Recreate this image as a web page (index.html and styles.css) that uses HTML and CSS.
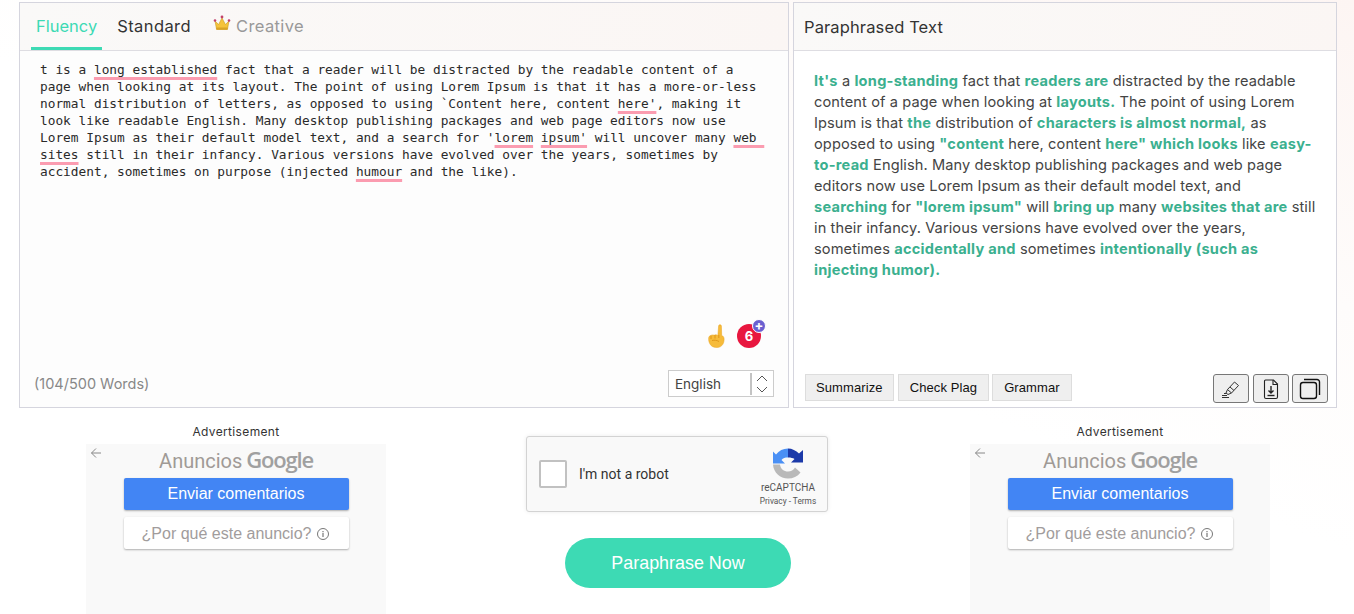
FILE: index.html
```html
<!DOCTYPE html>
<html lang="en">
<head>
<meta charset="utf-8">
<title>Paraphraser</title>
<link rel="stylesheet" href="styles.css">
</head>
<body>
<main class="page">
  <section class="editors">
    <div class="card card-left">
      <div class="card-head tabs">
        <span class="tab tab-active">Fluency</span>
        <span class="tab">Standard</span>
        <span class="tab tab-muted">
          <svg class="crown" viewBox="0 0 18 18" width="18" height="18"><path d="M2 7l3.600 3.500L9 4l3.400 6.500L16 7l-1.500 8h-11z" fill="#f5c33b" stroke="#c99a1e" stroke-width=".6"/><rect x="3.300" y="13.500" width="11.400" height="2.400" fill="#d9a326"/><circle cx="2" cy="6.500" r="1.300" fill="#c2416b"/><circle cx="9" cy="3" r="1.400" fill="#c2416b"/><circle cx="16" cy="6.500" r="1.300" fill="#c2416b"/></svg>
          Creative
        </span>
      </div>
      <div class="source">t is a <u>long established</u> fact that a reader will be distracted by the readable content of a<br>page when looking at its layout. The point of using Lorem Ipsum is that it has a more-or-less<br>normal distribution of letters, as opposed to using `Content here, content <u>here'</u>, making it<br>look like readable English. Many desktop publishing packages and web page editors now use<br>Lorem Ipsum as their default model text, and a search for '<u>lorem</u> <u>ipsum'</u> will uncover many <u>web&nbsp;</u><br><u>sites</u> still in their infancy. Various versions have evolved over the years, sometimes by<br>accident, sometimes on purpose (injected <u>humour</u> and the like).</div>
      <div class="helpers">
        <svg class="hand" viewBox="0 0 20 24" width="20" height="24"><path d="M12.600 2c0-1.700 2.800-1.700 2.800 0l.3 9.500c1.500.6 2.400 1.700 2.400 3.500 0 2-.3 3.800-1.300 5.300-1.200 2-3 3.200-6.100 3.200-3.500 0-5.800-1.400-7-4-.8-1.700-1.200-3.300-1-5.500.1-1.400 1-2.400 2-2.400 1.300-.9 2.600-.8 3.400-.3 1.300-.7 3-.5 3.800.2z" fill="#f6bb3a" stroke="#e8a21f" stroke-width=".5"/><path d="M5 11.500v3.500M9 11v3.500M6 16.500c2.500-.6 5-.3 7 1M12.800 11v3" fill="none" stroke="#d98e10" stroke-width=".8"/></svg>
        <span class="badge">6<span class="badge-plus">+</span></span>
      </div>
      <div class="card-foot">
        <span class="count">(104/500 Words)</span>
        <div class="lang">
          <span class="lang-name">English</span>
          <svg class="lang-arrows" viewBox="0 0 22 22" width="22" height="22"><path d="M1 0v22" stroke="#888" stroke-width="1"/><path d="M7 8l5-5 5 5M7 14l5 5 5-5" fill="none" stroke="#555" stroke-width="1"/></svg>
        </div>
      </div>
    </div>
    <div class="card card-right">
      <div class="card-head result-head">Paraphrased Text</div>
      <div class="result"><b>It's</b> a <b>long-standing</b> fact that <b>readers are</b> distracted by the readable<br>content of a page when looking at <b>layouts.</b> The point of using Lorem<br>Ipsum is that <b>the</b> distribution of <b>characters is almost normal,</b> as<br>opposed to using <b>"content</b> here, content <b>here" which looks</b> like <b>easy-</b><br><b>to-read</b> English. Many desktop publishing packages and web page<br>editors now use Lorem Ipsum as their default model text, and<br><b>searching</b> for <b>"lorem ipsum"</b> will <b>bring up</b> many <b>websites that are</b> still<br>in their infancy. Various versions have evolved over the years,<br>sometimes <b>accidentally and</b> sometimes <b>intentionally (such as</b><br><b>injecting humor).</b></div>
      <div class="result-foot">
        <button class="tool tool-sum">Summarize</button>
        <button class="tool tool-plag">Check Plag</button>
        <button class="tool">Grammar</button>
        <div class="icon-tools">
          <button class="icon-btn icon-btn-first"><svg viewBox="0 0 24 24" width="24" height="24" fill="none" stroke="#333" stroke-width="1"><path d="M8.500 12.500L15.500 5l4 3.500-7 7.500z"/><path d="M11 10l4 3.500"/><path d="M8.500 12.500L7 16l2 1.500 3.400-1.500"/><path d="M3 18.500h5M3 20.500h7M5 16.500h2" stroke-width="1.200"/></svg></button>
          <button class="icon-btn"><svg viewBox="0 0 24 24" width="24" height="24" fill="none" stroke="#222" stroke-width="1.100"><path d="M6.500 3h8l4 4v13a1.500 1.500 0 0 1-1.500 1.500H7A1.500 1.500 0 0 1 5.500 20V4a1 1 0 0 1 1-1z"/><path d="M14 3v4.500h4.500"/><path d="M12 9v7M9.500 13.500l2.500 2.500 2.500-2.500" stroke-width="1.400"/><path d="M8.500 18.500h7" stroke-width="1.400"/></svg></button>
          <button class="icon-btn"><svg viewBox="0 0 24 24" width="24" height="24" fill="none" stroke="#111" stroke-width="1.400"><rect x="2.500" y="5.500" width="16" height="16" rx="2.500"/><path d="M6 2.500h13a2.500 2.500 0 0 1 2.500 2.500v13"/></svg></button>
        </div>
      </div>
    </div>
  </section>

  <section class="lower">
    <div class="ad-col">
      <div class="ad-label">Advertisement</div>
      <div class="ad">
        <svg class="ad-back" viewBox="0 0 12 12" width="12" height="12"><path d="M11 6H1.500M6 1.500L1.500 6 6 10.500" fill="none" stroke="#888" stroke-width="1"/></svg>
        <div class="ad-title">Anuncios <span class="ad-google">Google</span></div>
        <div class="ad-btn ad-send">Enviar comentarios</div>
        <div class="ad-btn ad-why">¿Por qué este anuncio? <svg viewBox="0 0 14 14" width="14" height="14"><circle cx="7" cy="7" r="5.500" fill="none" stroke="#777" stroke-width="1"/><path d="M7 6v4M7 4v1.200" stroke="#777" stroke-width="1.200"/></svg></div>
      </div>
    </div>

    <div class="center-col">
      <div class="captcha">
        <span class="captcha-box"></span>
        <span class="captcha-text">I'm not a robot</span>
        <div class="captcha-brand">
          <svg viewBox="0 0 32 32" width="32" height="33"><path d="M16 1C11 1 7 3 4 7L1 4v12h12l-3.500-3.500C11 10.500 13 10 16 10z" fill="#4a90f5"/><path d="M16 1c4 0 8 2 11 5l4-3.500V15H19l3.500-3.500C21 10.500 19 10 16 10z" fill="#1c3aa9"/><path d="M1 17h7c.5 4.500 4 7 8 7 3 0 5.500-1.500 7-4l5.500 5c-3 4-7.500 6-12.500 6C8 31 1.500 25 1 17z" fill="#b9b9b9"/></svg>
          <span class="captcha-name">reCAPTCHA</span>
          <span class="captcha-links">Privacy - Terms</span>
        </div>
      </div>
      <button class="go">Paraphrase Now</button>
    </div>

    <div class="ad-col">
      <div class="ad-label">Advertisement</div>
      <div class="ad">
        <svg class="ad-back" viewBox="0 0 12 12" width="12" height="12"><path d="M11 6H1.500M6 1.500L1.500 6 6 10.500" fill="none" stroke="#888" stroke-width="1"/></svg>
        <div class="ad-title">Anuncios <span class="ad-google">Google</span></div>
        <div class="ad-btn ad-send">Enviar comentarios</div>
        <div class="ad-btn ad-why">¿Por qué este anuncio? <svg viewBox="0 0 14 14" width="14" height="14"><circle cx="7" cy="7" r="5.500" fill="none" stroke="#777" stroke-width="1"/><path d="M7 6v4M7 4v1.200" stroke="#777" stroke-width="1.200"/></svg></div>
      </div>
    </div>
  </section>
</main>
</body>
</html>
```
FILE: styles.css
```css
* { box-sizing: border-box; }
html, body { margin: 0; height: 100%; }
body {
  overflow: hidden;
  background: linear-gradient(200deg, #fdf5f3 0, #fefcfb 28%, #fff 50%);
  font-family: Inter, "Noto Sans", sans-serif;
  color: #333;
}
.page { height: 614px; overflow: hidden; padding: 2px 17px 0 19px; }
.editors { display: flex; gap: 4px; height: 406px; }
.card {
  display: flex;
  flex-direction: column;
  border: 1px solid #d5d5de;
  background: #fff;
}
.card-left { width: 770px; background: #fdfdfd; }
.card-right { width: 544px; }
.card-head {
  height: 48px;
  flex: none;
  border-bottom: 1px solid #dedde2;
  background: linear-gradient(100deg, #faf9f8, #fbf6f4);
}
.tabs { display: flex; padding-left: 11px; }
.tab {
  display: flex;
  align-items: center;
  gap: 5px;
  padding: 0 5px 2px;
  margin-right: 10px;
  height: 47px;
  font-size: 16.500px;
  letter-spacing: .4px;
  color: #333;
}
.tab-active { color: #3ddab4; letter-spacing: 0; border-bottom: 3px solid #3ddab4; padding: 1px 5px 0; }
.tab-muted { color: #999; margin-left: 2px; }
.crown { margin-top: -6px; }
.source {
  padding: 10px 20px 0;
  font: 12.800px/17px "DejaVu Sans Mono", "Liberation Mono", monospace;
  color: #2a2a2a;
  white-space: nowrap;
}
.source u {
  text-decoration: underline #fb9cb0 2.500px;
  text-decoration-skip-ink: none;
  text-underline-offset: 2.500px;
}
.helpers {
  display: flex;
  align-items: center;
  justify-content: flex-end;
  gap: 11px;
  margin-top: auto;
  margin-bottom: 13px;
  padding-right: 27px;
}
.badge {
  position: relative;
  display: block;
  width: 24px;
  height: 24px;
  border-radius: 50%;
  background: #e8173f;
  color: #fff;
  font: 700 13px/24px Inter, sans-serif;
  text-align: center;
}
.badge-plus {
  position: absolute;
  top: -5px;
  right: -5px;
  width: 14px;
  height: 14px;
  border: 1px solid #fff;
  border-radius: 50%;
  background: #6a5fd0;
  font-size: 13px;
  line-height: 11px;
}
.card-foot {
  display: flex;
  align-items: center;
  justify-content: space-between;
  height: 46px;
  flex: none;
  padding: 0 14px;
}
.count { font-size: 14.500px; color: #888; margin-top: -2px; }
.lang {
  display: flex;
  align-items: center;
  justify-content: space-between;
  width: 106px;
  height: 27px;
  margin-top: -1px;
  padding: 0 1px 0 6px;
  border: 1px solid #ccc;
  background: #fff;
  font-size: 13.500px;
  color: #444;
}
.result-head { padding: 14px 10px 0; font-size: 16.500px; letter-spacing: .12px; color: #333; }
.result {
  padding: 20px 20px 0;
  font-size: 14.600px;
  letter-spacing: .1px;
  line-height: 21px;
  color: #444;
  white-space: nowrap;
}
.result b { color: #3bb08f; font-weight: 700; letter-spacing: .25px; }
.result-foot {
  display: flex;
  align-items: flex-start;
  gap: 4px;
  margin-top: auto;
  padding: 0 8px 4px 11px;
}
.tool {
  height: 27px;
  padding: 0 11px;
  border: 1px solid #ddd;
  background: #efefef;
  font: 13px "Liberation Sans", sans-serif;
  letter-spacing: .1px;
  color: #111;
}
.tool-sum { padding: 0 10px; }
.tool-plag { margin-right: -1px; }
.icon-tools { display: flex; gap: 3px; margin-left: auto; }
.icon-btn {
  display: flex;
  align-items: center;
  justify-content: center;
  width: 36px;
  height: 29px;
  padding: 0;
  border: 1px solid #777;
  border-radius: 3px;
  background: #efefef;
}
.icon-btn-first { margin-right: 1px; }
.lower { display: flex; margin: 0 0 0 67px; }
.ad-col { width: 300px; flex: none; }
.ad-label {
  height: 36px;
  padding-top: 16px;
  font-size: 12px;
  letter-spacing: .35px;
  line-height: 16px;
  text-align: center;
  color: #333;
}
.ad {
  position: relative;
  display: flex;
  flex-direction: column;
  align-items: center;
  height: 180px;
  background: #f9f9f9;
}
.ad-back { position: absolute; top: 3px; left: 4px; }
.ad-title {
  height: 34px;
  font: 20px/30px Roboto, sans-serif;
  color: #a09a96;
}
.ad-google { margin-left: -1px; font: 600 22px/30px "Open Sans", sans-serif; color: #a0a0a0; letter-spacing: -1.200px; }
.ad-btn {
  display: flex;
  align-items: center;
  justify-content: center;
  gap: 5px;
  width: 225px;
  height: 32px;
  border-radius: 2px;
  font: 16px "Liberation Sans", sans-serif;
  box-shadow: 0 1px 2px rgba(0,0,0,.3);
}
.ad-send { background: #4285f4; color: #fff; margin-bottom: 7px; }
.ad-why { background: #fff; color: #a19c9c; padding-top: 1px; }
.center-col {
  display: flex;
  flex-direction: column;
  align-items: center;
  width: 302px;
  flex: none;
  margin: 28px 142px 0 140px;
}
.captcha {
  display: flex;
  align-items: center;
  width: 302px;
  height: 76px;
  padding-left: 12px;
  border: 1px solid #d3d3d3;
  border-radius: 3px;
  background: #f9f9f9;
  box-shadow: 0 0 4px rgba(0,0,0,.08);
}
.captcha-box {
  width: 28px;
  height: 28px;
  border: 2px solid #c1c1c1;
  border-radius: 2px;
  background: #fff;
}
.captcha-text { margin-left: 12px; font: 14px Roboto, sans-serif; color: #333; }
.captcha-brand {
  display: flex;
  flex-direction: column;
  align-items: center;
  width: 70px;
  margin-left: auto;
  margin-right: 4px;
  padding-top: 6px;
  color: #555;
  font-family: Roboto, sans-serif;
}
.captcha-name { font-size: 10px; line-height: 14px; margin-top: 1px; }
.captcha-links { font-size: 8.300px; line-height: 12px; }
.go {
  width: 226px;
  height: 50px;
  margin: 26px 0 0 2px;
  border: 0;
  border-radius: 25px;
  background: #3ddab4;
  color: #fff;
  font: 17.900px "Liberation Sans", sans-serif;
}
```
